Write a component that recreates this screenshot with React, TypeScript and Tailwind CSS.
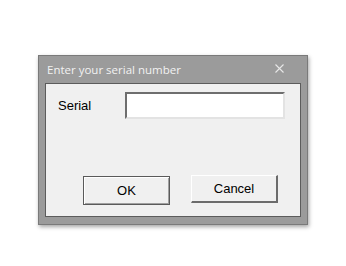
export default function App() {
  return (
    <div className="w-[346px] h-[266px] bg-white pl-[38px] pt-[55px]">
      {/* dialog frame */}
      <div className="w-[270px] h-[170px] bg-[#9b9b9b] border border-[#7a7a7a] shadow-[1px_2px_4px_rgba(0,0,0,0.35)] flex flex-col">
        <div className="h-[27px] flex items-center justify-between pl-[8px] pr-[23px]">
          <span className="text-[11.5px] text-[#f2f2f2] font-['Open_Sans',sans-serif] leading-none mt-[1px]">
            Enter your serial number
          </span>
          <svg width="9" height="9" viewBox="0 0 9 9" className="mt-[-3px]">
            <path d="M0.5 0.5 L8.5 8.5 M8.5 0.5 L0.5 8.5" stroke="#e8e8e8" strokeWidth="1.1" />
          </svg>
        </div>
        {/* client area */}
        <div className="mx-[6px] h-[134px] bg-[#f0f0f0] border border-[#5c5c5c] font-['Liberation_Sans',Arial,sans-serif] text-[13px] text-black">
          <div className="flex items-center pl-[12px] pt-[8px]">
            <span className="w-[67px]">Serial</span>
            <div className="w-[160px] h-[27px] bg-white border-2 border-t-[#6e6e6e] border-l-[#6e6e6e] border-b-[#e3e3e3] border-r-[#e3e3e3]" />
          </div>
          <div className="flex items-start pl-[37px] mt-[57px] gap-[21px]">
            <button className="w-[87px] h-[29px] bg-[#f0f0f0] border border-[#5a5a5a] shadow-[inset_1px_1px_0_#ffffff,inset_-1px_-1px_0_#a0a0a0] flex items-center justify-center">
              OK
            </button>
            <button className="w-[87px] h-[28px] mt-[-1px] bg-[#f0f0f0] border-t border-l border-t-white border-l-white border-b-2 border-r-2 border-b-[#6b6b6b] border-r-[#6b6b6b] flex items-center justify-center">
              Cancel
            </button>
          </div>
        </div>
      </div>
    </div>
  );
}
